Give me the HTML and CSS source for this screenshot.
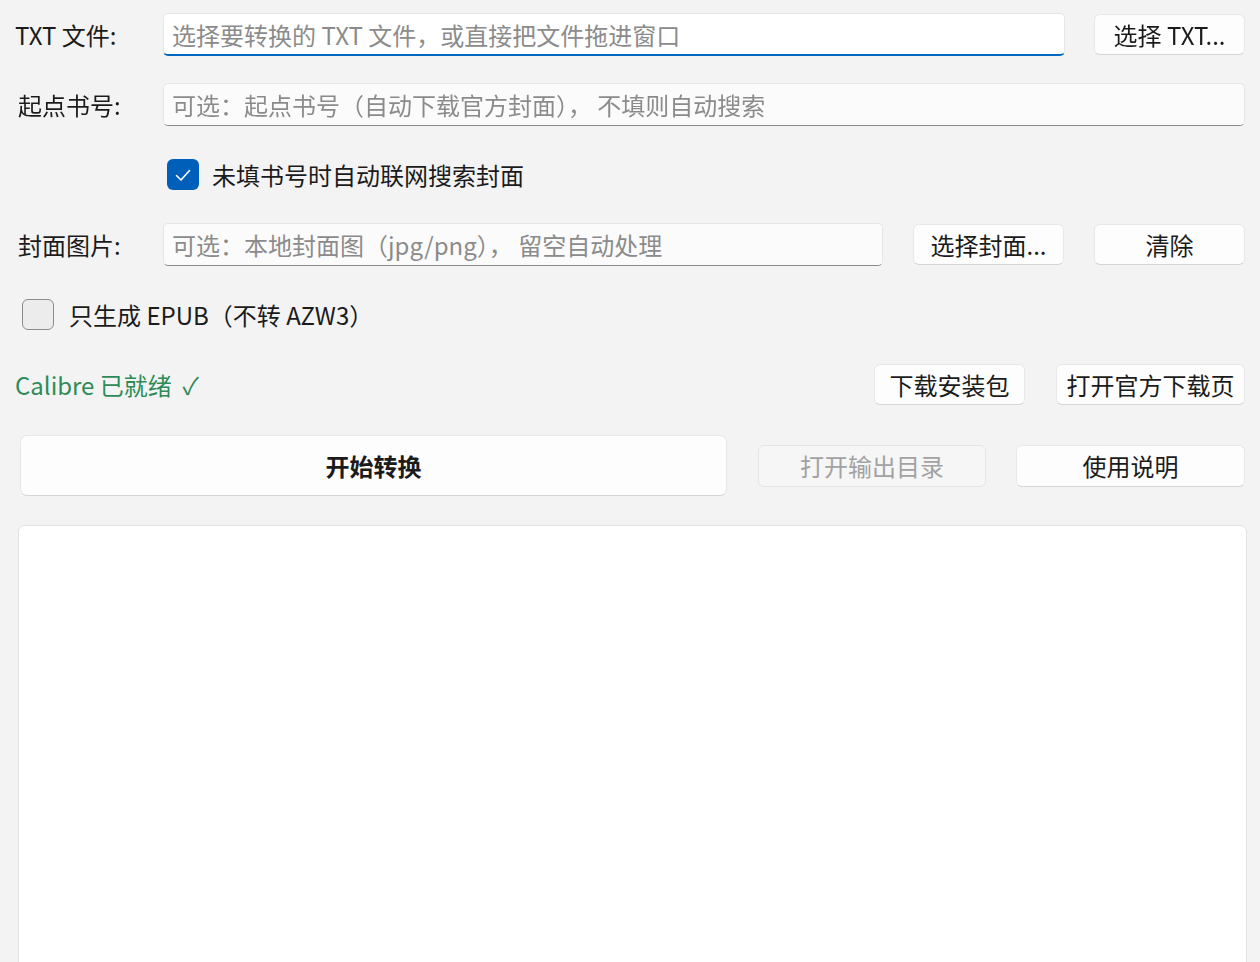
FILE: index.html
```html
<!DOCTYPE html>
<html lang="zh-CN">
  <head>
    <meta charset="UTF-8" />
    <meta name="viewport" content="width=device-width, initial-scale=1.0" />
    <title>TXT 转 EPUB / AZW3</title>
    <link rel="stylesheet" href="styles.css">
  </head>
  <body>
    <div class="window">
      <div class="row first">
        <label class="field-label" for="txt-path">TXT 文件:</label>
        <input class="line-edit focused" id="txt-path" type="text" placeholder="选择要转换的 TXT 文件，或直接把文件拖进窗口" autofocus>
        <button class="btn">选择 TXT...</button>
      </div>

      <div class="row">
        <label class="field-label cjk" for="book-id">起点书号:</label>
        <input class="line-edit" id="book-id" type="text" placeholder="可选：起点书号（自动下载官方封面）， 不填则自动搜索">
      </div>

      <div class="row">
        <label class="check check-indent">
          <span class="box checked">
            <svg width="22" height="22" viewBox="0 0 22 22"><path d="M4.5 11.5 L9 16 L17.5 6.5" fill="none" stroke="#fff" stroke-width="1.6" stroke-linecap="round" stroke-linejoin="round"/></svg>
          </span>
          <span>未填书号时自动联网搜索封面</span>
        </label>
      </div>

      <div class="row">
        <label class="field-label cjk" for="cover-path">封面图片:</label>
        <input class="line-edit" id="cover-path" type="text" placeholder="可选：本地封面图（jpg/png）， 留空自动处理">
        <button class="btn">选择封面...</button>
        <button class="btn">清除</button>
      </div>

      <div class="row">
        <label class="check epub-only">
          <span class="box"></span>
          <span>只生成 EPUB（不转 AZW3）</span>
        </label>
      </div>

      <div class="row">
        <span class="status">Calibre 已就绪 &nbsp;✓</span>
        <button class="btn">下载安装包</button>
        <button class="btn wide">打开官方下载页</button>
      </div>

      <div class="row actions">
        <button class="btn primary">开始转换</button>
        <button class="btn action" disabled>打开输出目录</button>
        <button class="btn action">使用说明</button>
      </div>

      <textarea class="log" readonly></textarea>
    </div>
  </body>
</html>
```

FILE: styles.css
```css
html, body {
  margin: 0;
  padding: 0;
  overflow: hidden;
  background-color: #f3f3f3;
  font-family: "Noto Sans CJK SC", "Liberation Sans", sans-serif;
  font-size: 24px;
  color: #1b1b1b;
}

.window {
  display: flex;
  flex-direction: column;
  gap: 27px;
  padding: 13px 15px 0 15px;
}

.row {
  display: flex;
  align-items: center;
  gap: 30px;
  height: 43px;
}

.row.first {
  gap: 29px;
}

.field-label {
  width: 118px;
  flex-shrink: 0;
  line-height: 1;
  white-space: nowrap;
}

.row.first .field-label {
  width: 119px;
}

/* cjk labels sit a few px right of the latin one */
.field-label.cjk {
  padding-left: 3px;
  width: 115px;
}

.line-edit {
  flex: 1;
  min-width: 0;
  height: 43px;
  box-sizing: border-box;
  padding: 0 8px;
  font-family: inherit;
  font-size: 24px;
  color: #1b1b1b;
  background-color: #fbfbfb;
  border: 1px solid #e6e6e6;
  border-bottom: 1px solid #8a8a8a;
  border-radius: 5px;
  outline: none;
  caret-color: #1b1b1b;
}

.line-edit::placeholder {
  color: #8b8b8b;
}

.line-edit.focused {
  background-color: #fff;
  border-bottom: 2px solid #0067c0;
}

.btn {
  width: 151px;
  height: 41px;
  flex-shrink: 0;
  padding: 0;
  font-family: inherit;
  font-size: 24px;
  line-height: 1;
  color: #1b1b1b;
  background-color: #fdfdfd;
  border: 1px solid #e8e8e8;
  border-bottom-color: #d6d6d6;
  border-radius: 6px;
}

.btn:disabled {
  color: #a2a2a2;
  background-color: #f6f6f6;
  border-color: #e5e5e5;
}

.btn.wide {
  width: 189px;
  margin-left: 1px;
}

.check {
  display: flex;
  align-items: center;
  gap: 13px;
  line-height: 1;
}

.check-indent {
  margin-left: 152px;
}

.epub-only {
  margin-left: 7px;
  gap: 15px;
}

.box {
  width: 32px;
  height: 31px;
  box-sizing: border-box;
  display: flex;
  justify-content: center;
  align-items: center;
  border: 1.5px solid #8c8c8c;
  border-radius: 6px;
  background-color: #ececec;
}

.box.checked {
  border: none;
  background-color: #005fb8;
}

.status {
  flex: 1;
  color: #2e8b57;
  line-height: 1;
}

.actions {
  height: 61px;
  margin-top: 2px;
  gap: 31px;
}

.btn.primary {
  flex: 1;
  height: 61px;
  margin-left: 5px;
  font-weight: 700;
  border-radius: 7px;
}

.btn.action {
  width: 228px;
  height: 42px;
}

.btn.action + .btn.action {
  margin-left: -1px;
  width: 229px;
}

.log {
  height: 460px;
  margin: 2px -2px 0 3px;
  padding: 8px;
  box-sizing: border-box;
  resize: none;
  background-color: #fff;
  border: 1px solid #e2e2e2;
  border-radius: 7px;
  outline: none;
}
```
